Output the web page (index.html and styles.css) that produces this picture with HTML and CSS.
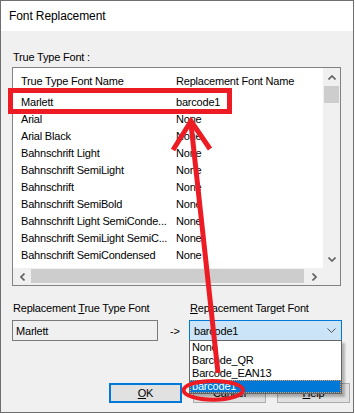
FILE: index.html
```
<!DOCTYPE html>
<html>
<head>
<meta charset="utf-8">
<link rel="stylesheet" href="styles.css">
</head>
<body>
<div class="dialog">
  <div class="titlebar">Font Replacement</div>
  <div class="content">
    <div class="label">True Type Font :</div>
    <div class="listbox">
      <div class="list-view">
        <div class="lv-row lv-header"><span>True Type Font Name</span><span>Replacement Font Name</span></div>
        <div class="lv-row"><span>Marlett</span><span>barcode1</span></div>
        <div class="lv-row"><span>Arial</span><span>None</span></div>
        <div class="lv-row"><span>Arial Black</span><span>None</span></div>
        <div class="lv-row"><span>Bahnschrift Light</span><span>None</span></div>
        <div class="lv-row"><span>Bahnschrift SemiLight</span><span>None</span></div>
        <div class="lv-row"><span>Bahnschrift</span><span>None</span></div>
        <div class="lv-row"><span>Bahnschrift SemiBold</span><span>None</span></div>
        <div class="lv-row"><span>Bahnschrift Light SemiConde...</span><span>None</span></div>
        <div class="lv-row"><span>Bahnschrift SemiLight SemiC...</span><span>None</span></div>
        <div class="lv-row"><span>Bahnschrift SemiCondensed</span><span>None</span></div>
      </div>
      <div class="vscroll">
        <div class="sb-btn"><svg width="8" height="5" viewBox="0 0 8 5"><polyline points="0.5,4.5 4,1 7.5,4.5" fill="none" stroke="#606060" stroke-width="1.6"/></svg></div>
        <div class="vthumb"></div>
        <div class="sb-track"></div>
        <div class="sb-btn"><svg width="8" height="5" viewBox="0 0 8 5"><polyline points="0.5,0.5 4,4 7.5,0.5" fill="none" stroke="#606060" stroke-width="1.6"/></svg></div>
      </div>
      <div class="hscroll">
        <div class="sb-btn"><svg width="5" height="8" viewBox="0 0 5 8"><polyline points="4.5,0.5 1,4 4.5,7.5" fill="none" stroke="#606060" stroke-width="1.6"/></svg></div>
        <div class="hthumb"></div>
        <div class="sb-track"></div>
        <div class="sb-btn"><svg width="5" height="8" viewBox="0 0 5 8"><polyline points="0.5,0.5 4,4 0.5,7.5" fill="none" stroke="#606060" stroke-width="1.6"/></svg></div>
      </div>
      <div class="corner"></div>
    </div>
    <div class="replace-grid">
      <div class="label">Replacement <u>T</u>rue Type Font</div>
      <div></div>
      <div class="label"><u>R</u>eplacement Target Font</div>
      <div class="textbox">Marlett</div>
      <div class="arrow-text">-&gt;</div>
      <div class="combo-wrap">
        <div class="combo"><span>barcode1</span><svg width="9" height="5" viewBox="0 0 9 5"><polyline points="0.5,0.5 4.5,4.5 8.5,0.5" fill="none" stroke="#505050" stroke-width="1"/></svg></div>
        <div class="dropdown">
          <div class="dd-item">None</div>
          <div class="dd-item">Barcode_QR</div>
          <div class="dd-item">Barcode_EAN13</div>
          <div class="dd-item sel">barcode1</div>
        </div>
      </div>
    </div>
    <div class="buttons">
      <div class="btn default"><span><u>O</u>K</span></div>
      <div class="btn"><span><u>C</u>ancel</span></div>
      <div class="btn"><span><u>H</u>elp</span></div>
    </div>
  </div>
</div>
<svg class="annot" width="355" height="414" viewBox="0 0 355 414">
  <rect x="10.5" y="90.5" width="219" height="21" fill="none" stroke="#ed1c24" stroke-width="5"/>
  <line x1="191" y1="124" x2="218" y2="373" stroke="#ed1c24" stroke-width="5"/>
  <polyline points="173,150 191,121 210,149" fill="none" stroke="#ed1c24" stroke-width="5" stroke-linejoin="miter"/>
  <ellipse cx="213.3" cy="390.3" rx="29.7" ry="9.4" fill="none" stroke="#ed1c24" stroke-width="4"/>
</svg>
</body>
</html>
```
FILE: styles.css
```
html, body {
  margin: 0;
  padding: 0;
}
body {
  position: relative;
  width: 355px;
  height: 414px;
  background: #ffffff;
  font-family: "Liberation Sans", Arial, sans-serif;
  font-size: 11px;
  letter-spacing: -0.2px;
  color: #000;
  overflow: hidden;
}
.dialog {
  width: 354px;
  height: 413px;
  box-sizing: border-box;
  border: 1px solid #6f6f6f;
  background: #f0f0f0;
  display: flex;
  flex-direction: column;
}
.titlebar {
  height: 30px;
  flex: none;
  background: #fff;
  padding-left: 8px;
  display: flex;
  align-items: center;
  font-size: 12px;
  letter-spacing: -0.1px;
}
.content {
  flex: 1;
  padding: 20px 0 0 11px;
  display: flex;
  flex-direction: column;
}
.label {
  height: 13px;
  line-height: 13px;
  padding-left: 1px;
  white-space: nowrap;
}
.listbox {
  margin-top: 3px;
  width: 329px;
  height: 219px;
  box-sizing: border-box;
  border: 1px solid #828282;
  background: #fff;
  display: grid;
  grid-template-columns: 310px 17px;
  grid-template-rows: 200px 17px;
}
.list-view {
  overflow: hidden;
}
.lv-row {
  display: grid;
  grid-template-columns: 155px 155px;
  height: 17px;
  align-items: center;
  white-space: nowrap;
}
.lv-header {
  height: 25px;
}
.lv-row span {
  padding-left: 8px;
  overflow: hidden;
}
.vscroll {
  background: #f0f0f0;
  display: flex;
  flex-direction: column;
}
.sb-btn {
  height: 18px;
  flex: none;
  display: flex;
  align-items: center;
  justify-content: center;
}
.sb-btn svg {
  display: block;
}
.vthumb {
  height: 17px;
  margin: 0 1px;
  background: #cdcdcd;
}
.sb-track {
  flex: 1;
}
.hscroll {
  background: #f0f0f0;
  display: flex;
}
.hscroll .sb-btn {
  width: 18px;
  height: auto;
}
.hthumb {
  width: 273px;
  margin: 1px 0 2px;
  background: #cdcdcd;
}
.corner {
  background: #f0f0f0;
}
.replace-grid {
  margin-top: 16px;
  display: grid;
  grid-template-columns: 146px 31px 153px;
  grid-template-rows: 13px 21px;
  row-gap: 5px;
}
.textbox {
  box-sizing: border-box;
  border: 1px solid #7a7a7a;
  background: #f0f0f0;
  padding-left: 3px;
  display: flex;
  align-items: center;
}
.arrow-text {
  padding-left: 12px;
  display: flex;
  align-items: center;
}
.combo-wrap {
  position: relative;
}
.combo {
  height: 21px;
  box-sizing: border-box;
  border: 1px solid #0078d7;
  background: #cce4f7;
  display: flex;
  align-items: center;
  justify-content: space-between;
  padding: 0 5px 0 4px;
}
.combo svg {
  display: block;
}
.dropdown {
  position: absolute;
  left: 0;
  top: 20px;
  width: 153px;
  box-sizing: border-box;
  border: 1px solid #646464;
  background: #fff;
  z-index: 2;
  box-shadow: 3px 3px 2px rgba(0, 0, 0, 0.25);
}
.dd-item {
  height: 13px;
  line-height: 13px;
  padding-left: 2px;
}
.dd-item.sel {
  background: #0078d7;
  color: #fff;
  outline: 1px dotted #f0a050;
  outline-offset: -1px;
}
.buttons {
  margin-top: 42px;
  margin-left: 97px;
  display: flex;
  gap: 11px;
}
.btn {
  width: 73px;
  height: 20px;
  box-sizing: border-box;
  border: 1px solid #adadad;
  background: #e1e1e1;
  display: flex;
  align-items: center;
  justify-content: center;
}
.btn.default {
  border: 2px solid #0078d7;
}
.annot {
  position: absolute;
  left: 0;
  top: 0;
  z-index: 5;
  pointer-events: none;
}
```
